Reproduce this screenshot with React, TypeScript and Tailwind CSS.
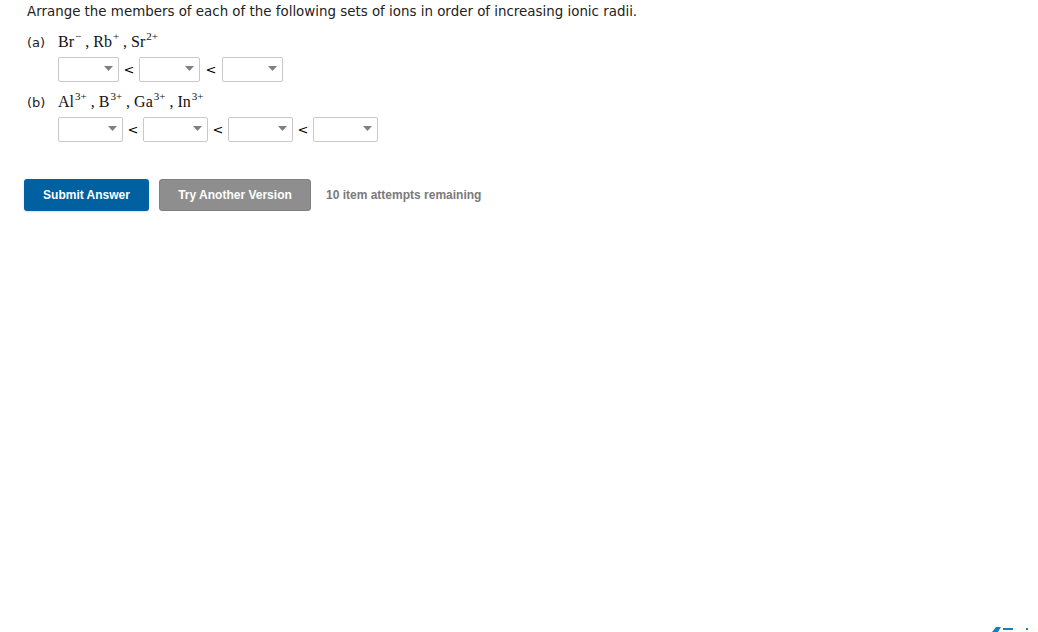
import React from 'react';

const verdana = { fontFamily: '"DejaVu Sans", Verdana, sans-serif' };
const serif = { fontFamily: '"Liberation Serif", "Times New Roman", serif' };

function Select({ w }: { w: string }) {
  return (
    <div className={`relative h-[25px] ${w} border border-[#c9c9c9] rounded-[2px] bg-white`}>
      <svg className="absolute right-[5px] top-[8px]" width="9" height="5" viewBox="0 0 9 5">
        <path d="M0 0 L9 0 L4.5 5 Z" fill="#808080" />
      </svg>
    </div>
  );
}

function Lt({ w = 'w-[20px]' }: { w?: string }) {
  return <span className={`${w} text-center text-[13px] text-black leading-none`}>&lt;</span>;
}

function Ion({ base, sup }: { base: string; sup: string }) {
  return (
    <span>
      {base}
      <span className="relative -top-[7px] text-[11px] ml-[1px]">{sup}</span>
    </span>
  );
}

export default function App() {
  return (
    <div className="relative w-[1038px] h-[632px] overflow-hidden bg-white text-[#222]" style={verdana}>
      <div className="pl-[27px] pt-[3px]">
        <p className="text-[13.4px] leading-[18px] text-[#222]">
          Arrange the members of each of the following sets of ions in order of increasing ionic radii.
        </p>

        {/* (a) */}
        <div className="flex items-baseline mt-[9px] h-[20px]">
          <span className="w-[31px] text-[13px]">(a)</span>
          <span className="text-[16px] text-[#111]" style={serif}>
            <Ion base="Br" sup="−" /> , <Ion base="Rb" sup="+" /> , <Ion base="Sr" sup="2+" />
          </span>
        </div>
        <div className="flex items-center pl-[31px] mt-[7px]">
          <Select w="w-[61px]" />
          <Lt />
          <Select w="w-[61px]" />
          <Lt w="w-[22px]" />
          <Select w="w-[61px]" />
        </div>

        {/* (b) */}
        <div className="flex items-baseline mt-[8px] h-[20px]">
          <span className="w-[31px] text-[13px]">(b)</span>
          <span className="text-[16px] text-[#111]" style={serif}>
            <Ion base="Al" sup="3+" /> , <Ion base="B" sup="3+" /> , <Ion base="Ga" sup="3+" /> , <Ion base="In" sup="3+" />
          </span>
        </div>
        <div className="flex items-center pl-[31px] mt-[7px]">
          <Select w="w-[65px]" />
          <Lt />
          <Select w="w-[65px]" />
          <Lt />
          <Select w="w-[65px]" />
          <Lt />
          <Select w="w-[65px]" />
        </div>
      </div>

      <div
        className="flex items-center pl-[24px] mt-[37px] gap-[10px]"
        style={{ fontFamily: '"Liberation Sans", Arial, sans-serif' }}
      >
        <button className="h-[32px] w-[125px] rounded-[3px] bg-[#0060a0] text-white text-[12px] font-bold shadow-sm">
          Submit Answer
        </button>
        <button className="h-[32px] w-[152px] rounded-[3px] bg-[#8e8e8e] border border-[#808080] text-white text-[12px] font-bold">
          Try Another Version
        </button>
        <span className="ml-[5px] text-[12px] font-bold text-[#7a7a7a]">10 item attempts remaining</span>
      </div>

      <svg className="absolute left-[990px] top-[626px]" width="48" height="6" viewBox="0 0 48 6">
        <path d="M2 6 L6 1 L11 1 L8 6 Z" fill="#1a7fc0" />
        <rect x="13" y="2" width="10" height="2" fill="#1a7fc0" />
        <rect x="36" y="2" width="2" height="2" fill="#1a7fc0" />
      </svg>
    </div>
  );
}
